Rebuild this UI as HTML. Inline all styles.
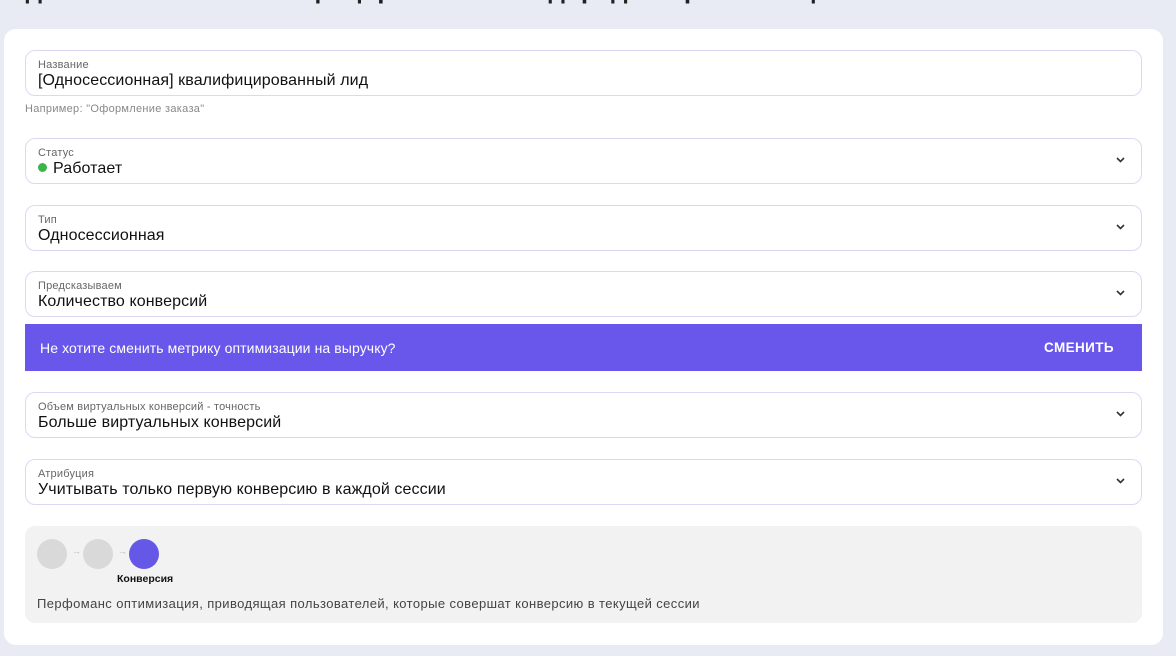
<!DOCTYPE html>
<html><head><meta charset="utf-8"><style>
*{box-sizing:border-box;margin:0;padding:0}
body{width:1176px;height:656px;background:#e9ebf4;font-family:"Liberation Sans",sans-serif;position:relative;overflow:hidden;color:#111}
.title{position:absolute;left:6px;top:-26px;font-size:26px;font-weight:bold;color:#222;white-space:nowrap}
.card{position:absolute;left:4px;top:29px;width:1159px;height:616px;background:#fff;border-radius:12px}
.f{position:absolute;left:25px;width:1117px;height:46px;border:1px solid #dcd8f4;border-radius:10px;background:#fff}
.f .l{position:absolute;left:12px;top:8px;font-size:11px;letter-spacing:.2px;color:#666}
.f .v{position:absolute;left:12px;top:21px;font-size:16px;letter-spacing:.1px;color:#111}
.f .c{position:absolute;right:16px;top:18px}
.hint{position:absolute;left:25px;top:103px;font-size:11px;letter-spacing:.3px;color:#888}
.banner{position:absolute;left:25px;top:324px;width:1117px;height:47px;background:#6857ea;color:#fff;font-size:13px}
.banner .t{position:absolute;left:15px;top:16px;font-size:14px;letter-spacing:.1px}
.banner .b{position:absolute;right:28px;top:16px;font-weight:bold;font-size:13.5px;letter-spacing:.4px}
.gb{position:absolute;left:25px;top:526px;width:1117px;height:97px;background:#f2f2f2;border-radius:10px}
.dot{position:absolute;top:13px;width:30px;height:30px;border-radius:50%;background:#d9d9d9}
.ar{position:absolute;top:20px;font-size:9px;color:#bbb}
</style></head><body>
<div class="title">Односессионная квалифицированный лид: редактирование цели</div>
<div class="card"></div>
<div class="f" style="top:50px"><div class="l">Название</div><div class="v">[Односессионная] квалифицированный лид</div></div>
<div class="hint">Например: "Оформление заказа"</div>
<div class="f" style="top:138px"><div class="l">Статус</div><div class="v"><span style="display:inline-block;width:9px;height:9px;border-radius:50%;background:#3cb44a;margin-right:6px;vertical-align:1px"></span>Работает</div><svg class="c" width="9" height="6" viewBox="0 0 9 6"><path d="M1 1l3.5 3.5L8 1" fill="none" stroke="#333" stroke-width="1.6"/></svg></div>
<div class="f" style="top:205px"><div class="l">Тип</div><div class="v">Односессионная</div><svg class="c" width="9" height="6" viewBox="0 0 9 6"><path d="M1 1l3.5 3.5L8 1" fill="none" stroke="#333" stroke-width="1.6"/></svg></div>
<div class="f" style="top:271px"><div class="l">Предсказываем</div><div class="v">Количество конверсий</div><svg class="c" width="9" height="6" viewBox="0 0 9 6"><path d="M1 1l3.5 3.5L8 1" fill="none" stroke="#333" stroke-width="1.6"/></svg></div>
<div class="banner"><div class="t">Не хотите сменить метрику оптимизации на выручку?</div><div class="b">СМЕНИТЬ</div></div>
<div class="f" style="top:392px"><div class="l">Объем виртуальных конверсий - точность</div><div class="v">Больше виртуальных конверсий</div><svg class="c" width="9" height="6" viewBox="0 0 9 6"><path d="M1 1l3.5 3.5L8 1" fill="none" stroke="#333" stroke-width="1.6"/></svg></div>
<div class="f" style="top:459px"><div class="l">Атрибуция</div><div class="v">Учитывать только первую конверсию в каждой сессии</div><svg class="c" width="9" height="6" viewBox="0 0 9 6"><path d="M1 1l3.5 3.5L8 1" fill="none" stroke="#333" stroke-width="1.6"/></svg></div>
<div class="gb">
<div class="dot" style="left:12px"></div><div class="ar" style="left:47px">→</div>
<div class="dot" style="left:58px"></div><div class="ar" style="left:93px">→</div>
<div class="dot" style="left:104px;background:#6558e6"></div>
<div style="position:absolute;left:92px;top:47px;font-size:10.5px;font-weight:bold;color:#111">Конверсия</div>
<div style="position:absolute;left:12px;top:70px;font-size:13px;letter-spacing:.4px;color:#444">Перфоманс оптимизация, приводящая пользователей, которые совершат конверсию в текущей сессии</div>
</div>
</body></html>
